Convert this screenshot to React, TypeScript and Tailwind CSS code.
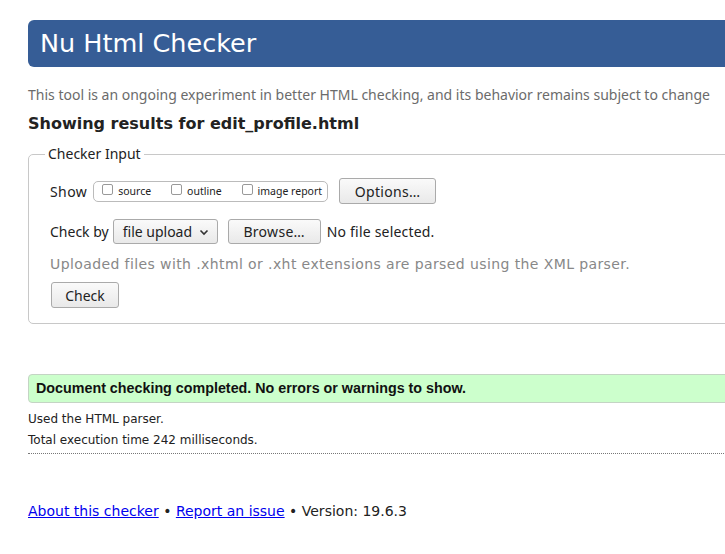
import React from "react";

function Checkbox({ label }: { label: string }) {
  return (
    <label className="flex items-center gap-[5px] text-[10.5px] text-[#222]">
      <span className="inline-block w-[11px] h-[11px] rounded-[2px] border border-[#999] bg-white -mt-[4px]"></span>
      <span className="mt-[2px]">{label}</span>
    </label>
  );
}

export default function App() {
  return (
    <div className="w-[760px] overflow-hidden pl-[28px] pb-[24px] bg-white font-['DejaVu_Sans',sans-serif] text-[#222]">
      <div className="w-[760px]">
        <h1 className="mt-[20px] h-[47px] flex items-center pl-[12px] bg-[#365d96] rounded-l-[6px] text-white text-[25.5px] font-normal">
          Nu Html Checker
        </h1>

        <p className="mt-[18px] text-[14px] text-[#6b6b6b] leading-[20px] font-['Noto_Sans',sans-serif]">
          This tool is an ongoing experiment in better HTML checking, and its behavior remains subject to change
        </p>

        <h2 className="mt-[9px] text-[16px] font-bold leading-[20px]">
          Showing results for edit_profile.html
        </h2>

        <fieldset className="mt-[12px] border border-[#c8c8c8] rounded-[5px] pl-[21px] pb-[15px] font-['Noto_Sans',sans-serif]">
          <legend className="-ml-[5px] px-[3px] text-[14px] leading-[16px] text-[#222]">Checker Input</legend>

          <div className="mt-[16px] flex items-center text-[14px]">
            <span className="mr-[6px] tracking-[0.4px]">Show</span>
            <div className="h-[21px] flex items-center gap-[20px] pl-[8px] pr-[5px] border border-[#bbb] rounded-[5px]">
              <Checkbox label="source" />
              <Checkbox label="outline" />
              <Checkbox label="image report" />
            </div>
            <button className="ml-[11px] h-[26px] w-[97px] border border-[#aaa] rounded-[3px] bg-gradient-to-b from-[#fafafa] to-[#e9e9e9] text-[14px] text-[#222] tracking-[0.3px]">
              Options…
            </button>
          </div>

          <div className="mt-[15px] flex items-center text-[14px]">
            <span className="mr-[4px]">Check by</span>
            <div className="h-[25px] w-[105px] flex items-center justify-between pl-[9px] pr-[8px] border border-[#aaa] rounded-[3px] bg-gradient-to-b from-[#fafafa] to-[#e9e9e9]">
              <span>file upload</span>
              <svg width="10" height="7" viewBox="0 0 10 7" className="mt-[1px]">
                <path d="M1.5 1.5 L5 5 L8.5 1.5" fill="none" stroke="#333" strokeWidth="1.6" />
              </svg>
            </div>
            <button className="ml-[10px] h-[25px] w-[93px] border border-[#aaa] rounded-[3px] bg-gradient-to-b from-[#fafafa] to-[#e9e9e9] text-[14px] text-[#222] tracking-[0.3px]">
              Browse…
            </button>
            <span className="ml-[6px] tracking-[0.2px]">No file selected.</span>
          </div>

          <p className="mt-[10px] text-[14px] leading-[20px] text-[#888] font-['DejaVu_Sans',sans-serif] tracking-[0.4px]">
            Uploaded files with .xhtml or .xht extensions are parsed using the XML parser.
          </p>

          <button className="mt-[8px] ml-[1px] h-[26px] w-[68px] border border-[#aaa] rounded-[3px] bg-gradient-to-b from-[#fafafa] to-[#e9e9e9] text-[14px] text-[#222]">
            Check
          </button>
        </fieldset>

        <div className="mt-[50px] h-[29px] flex items-center pl-[7px] bg-[#ccffcc] border border-[#c4d4c4] rounded-l-[4px] font-['Liberation_Sans',Arial,sans-serif] font-bold text-[14.3px] text-[#111]">
          Document checking completed. No errors or warnings to show.
        </div>

        <p className="mt-[6px] text-[12px] leading-[21px]">Used the HTML parser.</p>
        <p className="text-[12px] leading-[21px]">Total execution time 242 milliseconds.</p>

        <div className="mt-[2px] border-t border-dotted border-[#777]"></div>

        <p className="mt-[47px] text-[14px] leading-[20px]">
          <a href="#" className="text-[#0000ee] underline">About this checker</a>
          {" • "}
          <a href="#" className="text-[#0000ee] underline">Report an issue</a>
          {" • Version: 19.6.3"}
        </p>
      </div>
    </div>
  );
}
